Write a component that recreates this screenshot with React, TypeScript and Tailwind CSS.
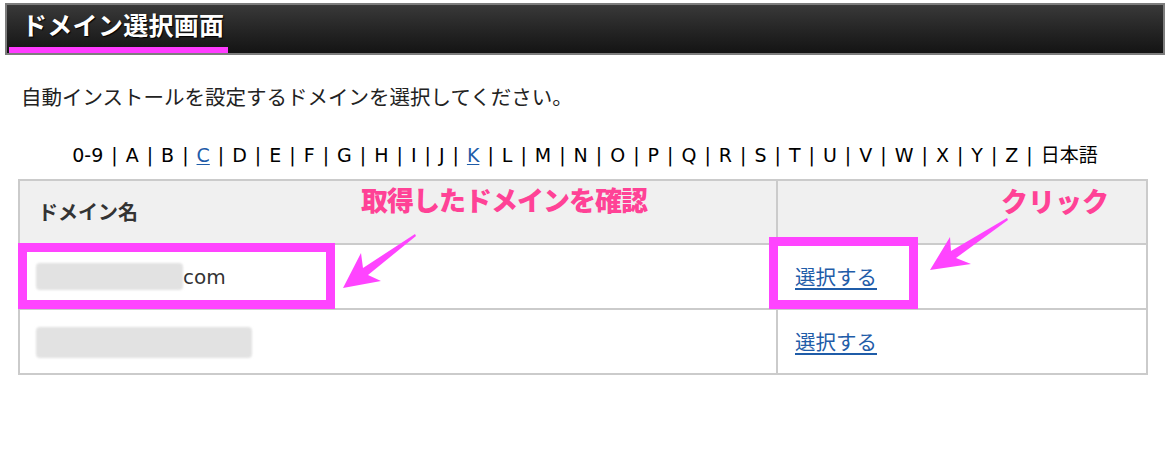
import React from "react";

const letters = ["0-9", "A", "B", "C", "D", "E", "F", "G", "H", "I", "J", "K", "L", "M", "N", "O", "P", "Q", "R", "S", "T", "U", "V", "W", "X", "Y", "Z", "日本語"];
const linked = ["C", "K"];

const font = "font-['DejaVu_Sans','Noto_Sans_CJK_JP',sans-serif]";

function Blur({ w, h }: { w: number; h: number }) {
  return (
    <span
      className="inline-block bg-[#e2e2e2] blur-[1px] rounded-sm align-middle"
      style={{ width: w, height: h }}
    />
  );
}

export default function App() {
  return (
    <div className={`relative w-[1170px] h-[456px] bg-white text-[#222] ${font}`}>
      <div className="pt-[3px] pl-[5px]">
        <div className="w-[1160px] h-[52px] border-2 border-[#7d7d7d] bg-linear-to-b from-[#393939] to-[#141414] flex items-end pl-[2px]">
          <div className="w-[219px] h-full border-b-[6px] border-[#ff3cff] pl-[13px] pb-[3px] flex items-center text-white font-bold text-[25px] tracking-[0.3px] font-['Noto_Sans_CJK_JP',sans-serif] [text-shadow:1px_1px_1px_#000]">
            ドメイン選択画面
          </div>
        </div>
      </div>

      <p className="mt-[26px] pl-[21px] text-[20.5px] leading-[30px] font-['Noto_Sans_CJK_JP',sans-serif]">
        自動インストールを設定するドメインを選択してください。
      </p>

      <div className="mt-[32px] h-[24px] flex justify-center items-center text-[19px] leading-[24px] text-black">
        {letters.map((l, i) => (
          <React.Fragment key={l}>
            {linked.includes(l) ? (
              <a className="text-[#1f5ca8] underline underline-offset-2">{l}</a>
            ) : (
              <span>{l}</span>
            )}
            {i < letters.length - 1 && <span className="px-[8px]">|</span>}
          </React.Fragment>
        ))}
      </div>

      <table className="mt-[12px] ml-[18px] w-[1130px] border-collapse border-2 border-[#cbcbcb] text-[20px] font-['Noto_Sans_CJK_JP',sans-serif]">
        <tbody>
          <tr className="h-[64px] bg-[#f0f0f0]">
            <th className="w-[758px] border-2 border-[#cbcbcb] pl-[18px] text-left font-bold text-[#333]">ドメイン名</th>
            <th className="border-2 border-[#cbcbcb]"></th>
          </tr>
          <tr className="h-[65px]">
            <td className="border-2 border-[#cbcbcb] pl-[16px]">
              <span className="flex items-center">
                <Blur w={147} h={27} />
                <span className={`text-[#333] text-[20px] ${font}`}>com</span>
              </span>
            </td>
            <td className="border-2 border-[#cbcbcb] pl-[17px]">
              <a className="text-[#1f5ca8] underline underline-offset-[3px] text-[20.5px]">選択する</a>
            </td>
          </tr>
          <tr className="h-[65px]">
            <td className="border-2 border-[#cbcbcb] pl-[16px]">
              <Blur w={216} h={31} />
            </td>
            <td className="border-2 border-[#cbcbcb] pl-[17px]">
              <a className="text-[#1f5ca8] underline underline-offset-[3px] text-[20.5px]">選択する</a>
            </td>
          </tr>
        </tbody>
      </table>

      {/* annotations */}
      <div className="absolute left-[18px] top-[243px] w-[317px] h-[66px] border-[9px] border-[#ff44ff]" />
      <div className="absolute left-[769px] top-[237px] w-[149px] h-[72px] border-[9px] border-[#ff44ff]" />
      <div className="absolute left-[361px] top-[180px] text-[27px] font-black text-[#ff4296] tracking-[-1px] font-['Noto_Sans_CJK_JP',sans-serif]">
        取得したドメインを確認
      </div>
      <div className="absolute left-[1001px] top-[181px] text-[27px] font-black text-[#ff4296] font-['Noto_Sans_CJK_JP',sans-serif]">
        クリック
      </div>
      <svg className="absolute left-0 top-0 pointer-events-none" width="1170" height="456">
        <polygon points="343,288 361,253 363,268 415,234 416,236 368,275 381,281" fill="#ff44ff" />
        <polygon points="930,270 950,237 951,251 1007,218 1008,220 956,258 971,264" fill="#ff44ff" />
      </svg>
    </div>
  );
}
